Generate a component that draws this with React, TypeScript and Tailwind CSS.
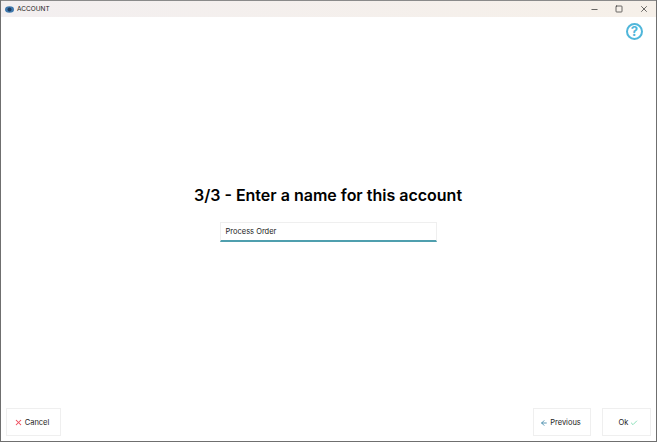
import React from 'react';
import { Minus, Square, X, Check, ArrowLeft } from 'lucide-react';

function AppLogo() {
  return (
    <svg width="9" height="7" viewBox="0 0 9 7">
      <ellipse cx="4.5" cy="3.5" rx="4.5" ry="3.2" fill="#3f78ad" />
      <ellipse cx="4.5" cy="3.5" rx="2" ry="2" fill="#1d3f66" />
    </svg>
  );
}

function HelpIcon() {
  return (
    <div className="w-[17px] h-[17px] rounded-full border-2 border-[#4fb6da] flex items-center justify-center text-[#4fb6da] text-[13px] font-bold leading-none">
      ?
    </div>
  );
}

function FooterButton({ children, className }: { children: React.ReactNode; className: string }) {
  return (
    <button className={`h-[28px] border border-[#efefef] bg-white flex items-center justify-center gap-[2px] text-[7.5px] text-[#222222] ${className}`}>
      {children}
    </button>
  );
}

export default function App() {
  return (
    <div className="w-[657px] h-[442px] flex flex-col bg-white border-x border-b border-[#6f6f6f] font-['Inter',sans-serif] overflow-hidden">
      {/* Title bar */}
      <div className="h-[17px] shrink-0 flex items-center justify-between bg-gradient-to-r from-[#f3eff0] to-[#f6f0e9] border-t border-[#8a8a8a]">
        <div className="flex items-center gap-[3px] pl-[4px] pt-[1px]">
          <AppLogo />
          <span className="text-[6.5px] text-[#222222]">ACCOUNT</span>
        </div>
        <div className="flex items-center gap-[16px] pr-[7px] text-[#222222]">
          <Minus size={9} strokeWidth={1.8} />
          <Square size={8} strokeWidth={2} />
          <X size={10} strokeWidth={1.6} />
        </div>
      </div>

      {/* Help */}
      <div className="flex justify-end pt-[6px] pr-[13px]">
        <HelpIcon />
      </div>

      {/* Content */}
      <div className="flex-1 flex flex-col items-center pt-[143px] pr-[1px]">
        <h1 className="text-[16px] leading-[24px] font-semibold text-black">3/3 - Enter a name for this account</h1>
        <div className="mt-[15px] w-[217px] h-[20px] pt-[1px] border border-[#efefef] border-b-2 border-b-[#4f9fae] flex items-center pl-[5px] text-[7.5px] text-[#222222]">
          Process Order
        </div>
      </div>

      {/* Footer */}
      <div className="flex items-center justify-between pl-[5px] pr-[5px] pb-[5px]">
        <FooterButton className="w-[55px] pr-[4px] pt-[1px]">
          <X size={9} strokeWidth={2.8} className="text-[#ef4a5a]" />
          Cancel
        </FooterButton>
        <div className="flex items-center gap-[11px]">
          <FooterButton className="w-[58px] pr-[3px] pt-[1px]">
            <ArrowLeft size={8} strokeWidth={2.6} className="text-[#3f86a8]" />
            Previous
          </FooterButton>
          <FooterButton className="w-[49px] pl-[4px] pt-[1px]">
            Ok
            <Check size={8} strokeWidth={2.4} className="text-[#6fd8a8]" />
          </FooterButton>
        </div>
      </div>
    </div>
  );
}
